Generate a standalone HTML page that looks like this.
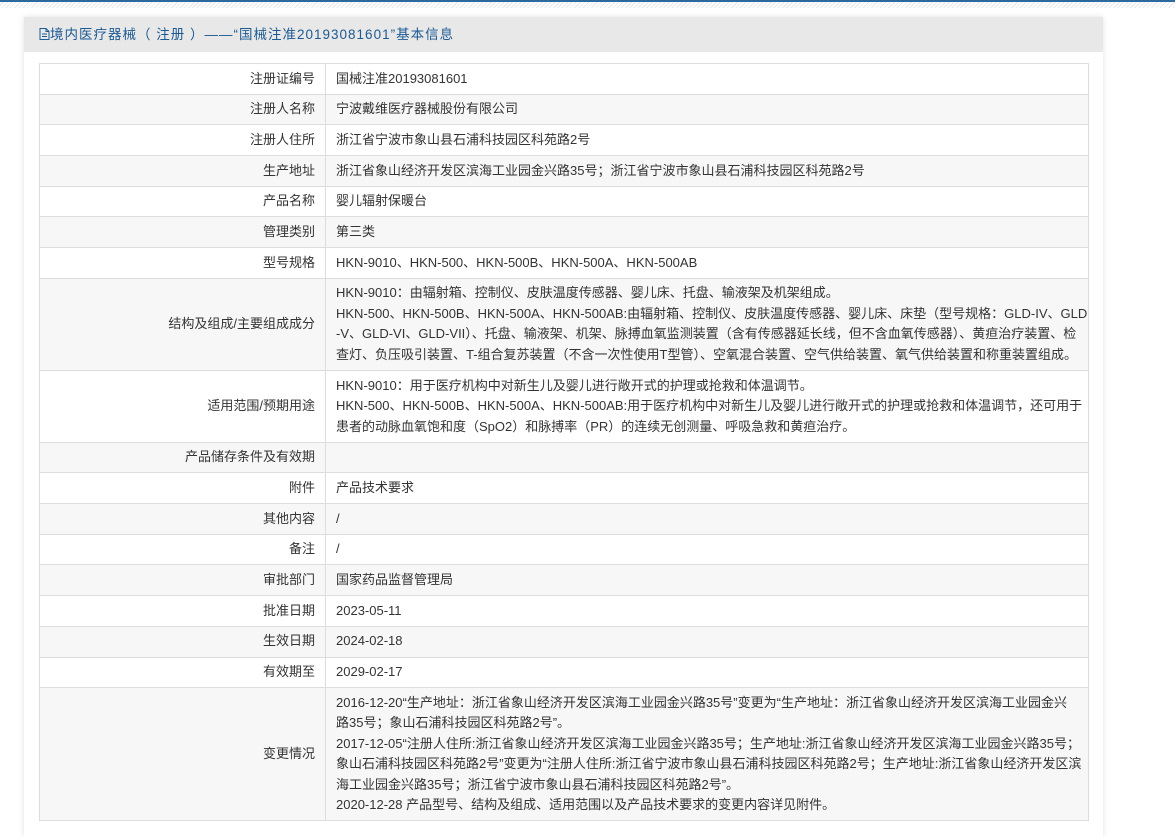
<!DOCTYPE html>
<html><head><meta charset="utf-8"><style>
body{margin:0;background:#fff;font-family:"Liberation Sans","Noto Sans CJK SC",sans-serif;font-size:13px;color:#333;width:1175px;height:819px;overflow:hidden;position:relative}
.top{position:absolute;left:0;top:0;width:1175px;height:8px;background:repeating-linear-gradient(135deg,#fff 0 2px,#e6e9ee 2px 3px);border-top:2px solid #2b6a9f;box-sizing:border-box}
.panel{position:absolute;left:24px;top:17px;width:1079px;height:820px;background:#fff;box-shadow:0 0 6px rgba(0,0,0,.12)}
.hd{height:35px;background:#e8e8e8;color:#1c5a93;font-size:13.5px;line-height:35px;padding-left:15px;letter-spacing:1px}
table{position:absolute;left:15px;top:46px;width:1050px;border-collapse:collapse;border:1px solid #ccc;table-layout:fixed}
td{border:1px solid #ddd;line-height:20.5px;padding:4.6px 10px;vertical-align:middle;white-space:nowrap;overflow:hidden}
td.l{text-align:right;padding-right:10px}
tr:nth-child(even){background:#f7f7f7}
</style></head><body>
<div class="top"></div>
<div class="panel">
<div class="hd"><svg width="11" height="12" viewBox="0 0 11 12" style="vertical-align:-1px"><path d="M1 .5h6l3 3v8H1z M7 .5v3h3 M3 6h5M3 8.5h5" fill="none" stroke="#1c5a93"/></svg>境内医疗器械（ 注册 ）——“国械注准20193081601”基本信息</div>
<table>
<colgroup><col style="width:286px"><col></colgroup>
<tr><td class="l">注册证编号</td><td>国械注准20193081601</td></tr>
<tr><td class="l">注册人名称</td><td>宁波戴维医疗器械股份有限公司</td></tr>
<tr><td class="l">注册人住所</td><td>浙江省宁波市象山县石浦科技园区科苑路2号</td></tr>
<tr><td class="l">生产地址</td><td>浙江省象山经济开发区滨海工业园金兴路35号；浙江省宁波市象山县石浦科技园区科苑路2号</td></tr>
<tr><td class="l">产品名称</td><td>婴儿辐射保暖台</td></tr>
<tr><td class="l">管理类别</td><td>第三类</td></tr>
<tr><td class="l">型号规格</td><td>HKN-9010、HKN-500、HKN-500B、HKN-500A、HKN-500AB</td></tr>
<tr><td class="l">结构及组成/主要组成成分</td><td>HKN-9010：由辐射箱、控制仪、皮肤温度传感器、婴儿床、托盘、输液架及机架组成。<br>HKN-500、HKN-500B、HKN-500A、HKN-500AB:由辐射箱、控制仪、皮肤温度传感器、婴儿床、床垫（型号规格：GLD-IV、GLD<br>-V、GLD-VI、GLD-VII）、托盘、输液架、机架、脉搏血氧监测装置（含有传感器延长线，但不含血氧传感器）、黄疸治疗装置、检<br>查灯、负压吸引装置、T-组合复苏装置（不含一次性使用T型管）、空氧混合装置、空气供给装置、氧气供给装置和称重装置组成。</td></tr>
<tr><td class="l">适用范围/预期用途</td><td>HKN-9010：用于医疗机构中对新生儿及婴儿进行敞开式的护理或抢救和体温调节。<br>HKN-500、HKN-500B、HKN-500A、HKN-500AB:用于医疗机构中对新生儿及婴儿进行敞开式的护理或抢救和体温调节，还可用于<br>患者的动脉血氧饱和度（SpO2）和脉搏率（PR）的连续无创测量、呼吸急救和黄疸治疗。</td></tr>
<tr><td class="l">产品储存条件及有效期</td><td></td></tr>
<tr><td class="l">附件</td><td>产品技术要求</td></tr>
<tr><td class="l">其他内容</td><td>/</td></tr>
<tr><td class="l">备注</td><td>/</td></tr>
<tr><td class="l">审批部门</td><td>国家药品监督管理局</td></tr>
<tr><td class="l">批准日期</td><td>2023-05-11</td></tr>
<tr><td class="l">生效日期</td><td>2024-02-18</td></tr>
<tr><td class="l">有效期至</td><td>2029-02-17</td></tr>
<tr><td class="l">变更情况</td><td>2016-12-20“生产地址：浙江省象山经济开发区滨海工业园金兴路35号”变更为“生产地址：浙江省象山经济开发区滨海工业园金兴<br>路35号；象山石浦科技园区科苑路2号”。<br>2017-12-05“注册人住所:浙江省象山经济开发区滨海工业园金兴路35号；生产地址:浙江省象山经济开发区滨海工业园金兴路35号；<br>象山石浦科技园区科苑路2号”变更为“注册人住所:浙江省宁波市象山县石浦科技园区科苑路2号；生产地址:浙江省象山经济开发区滨<br>海工业园金兴路35号；浙江省宁波市象山县石浦科技园区科苑路2号”。<br>2020-12-28 产品型号、结构及组成、适用范围以及产品技术要求的变更内容详见附件。</td></tr>
</table>
</div>
</body></html>
